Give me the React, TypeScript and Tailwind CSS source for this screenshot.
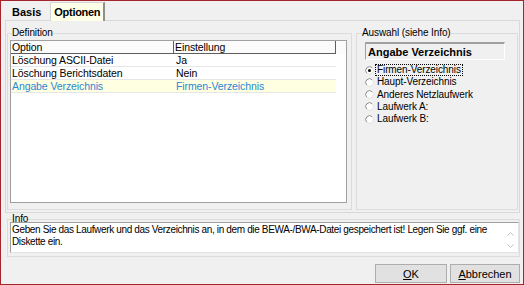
import React from 'react';

const rows = [
  { option: 'Löschung ASCII-Datei', value: 'Ja', active: false },
  { option: 'Löschung Berichtsdaten', value: 'Nein', active: false },
  { option: 'Angabe Verzeichnis', value: 'Firmen-Verzeichnis', active: true },
];

const choices = ['Firmen-Verzeichnis', 'Haupt-Verzeichnis', 'Anderes Netzlaufwerk', 'Laufwerk A:', 'Laufwerk B:'];

function Radio({ checked }: { checked: boolean }) {
  return (
    <svg width="9" height="9" viewBox="0 0 9 9" className="shrink-0">
      <circle cx="4.5" cy="4.5" r="3.8" fill="#ffffff" />
      <path d="M7.2 1.8 A3.8 3.8 0 0 0 1.8 7.2" fill="none" stroke="#8a8a8a" strokeWidth="1" />
      <path d="M1.8 7.2 A3.8 3.8 0 0 0 7.2 1.8" fill="none" stroke="#e2e2e2" strokeWidth="1" />
      {checked && <circle cx="4.5" cy="4.5" r="1.5" fill="#000000" />}
    </svg>
  );
}

function Chevron({ up }: { up: boolean }) {
  return (
    <svg width="7" height="4" viewBox="0 0 7 4">
      <polyline
        points={up ? '0.5,3.5 3.5,0.5 6.5,3.5' : '0.5,0.5 3.5,3.5 6.5,0.5'}
        fill="none"
        stroke="#c2c2c2"
        strokeWidth="1"
      />
    </svg>
  );
}

export default function App() {
  return (
    <div className="w-[524px] h-[285px] bg-[#f0f0f0] border border-[#a4262c] flex flex-col overflow-hidden text-[10px] leading-[12px] tracking-[-0.1px] text-black font-['Liberation_Sans',Arial,sans-serif]">
      {/* tabs */}
      <div className="h-[19px] shrink-0 flex items-end pl-[5px] text-[11px] tracking-normal">
        <div className="h-[16px] px-[6px] flex items-center font-bold">Basis</div>
        <div className="relative z-10 ml-[3px] h-[19px] -mb-px px-[3px] flex items-center font-bold tracking-[-0.3px] bg-[#ffffe8] border-l border-t border-[#d4d4d4] border-r-2 border-r-[#8e8e8e]">
          Optionen
        </div>
      </div>

      {/* tab page */}
      <div className="ml-[4px] w-[515px] h-[193px] shrink-0 border border-[#d9d9d9] flex items-start">
        <fieldset className="ml-[1px] mt-[6px] w-[345px] h-[183px] border border-[#dcdcdc]">
          <legend className="ml-[4px] leading-[12px]">Definition</legend>
          <div className="mt-[1px] ml-[2px] w-[337px] h-[163px] border border-[#a0a0a0] bg-white text-[10.5px]">
            <div className="flex h-[13px] bg-[#fbfbfb]">
              <div className="w-[163px] border-r border-b border-[#5e5e5e] pl-[1px] leading-[12px]">Option</div>
              <div className="w-[162px] border-r border-b border-[#5e5e5e] pl-[1px] leading-[12px]">Einstellung</div>
            </div>
            {rows.map((r) => (
              <div
                key={r.option}
                className={`flex w-[325px] h-[13px] border-b border-[#e6e6e6] ${
                  r.active ? 'bg-[#ffffe1] text-[#2b86d6]' : ''
                }`}
              >
                <div className="w-[163px] pl-[1px] leading-[12px]">{r.option}</div>
                <div className="w-[162px] pl-[2px] leading-[12px]">{r.value}</div>
              </div>
            ))}
          </div>
        </fieldset>

        <fieldset className="ml-[4px] mt-[6px] w-[162px] h-[183px] border border-[#dcdcdc]">
          <legend className="ml-[5px] leading-[12px]">Auswahl (siehe Info)</legend>
          <div className="ml-[8px] mt-[3px] w-[140px] h-[18px] flex items-center pl-[2px] text-[11px] font-bold tracking-normal border-t-2 border-l border-[#a0a0a0] border-r border-b border-r-[#ffffff] border-b-[#ffffff]">
            Angabe Verzeichnis
          </div>
          <div className="mt-[4px] flex flex-col">
            {choices.map((c, i) => (
              <div key={c} className="h-[12.25px] flex items-center pl-[8px]">
                <Radio checked={i === 0} />
                <span
                  className={`ml-[1px] px-[1px] leading-[10px] border border-dotted ${
                    i === 0 ? 'border-[#000000]' : 'border-transparent'
                  }`}
                >
                  {c}
                </span>
              </div>
            ))}
          </div>
        </fieldset>
      </div>

      {/* info */}
      <fieldset className="ml-[6px] w-[513px] h-[44px] shrink-0 border border-[#dcdcdc]">
        <legend className="ml-[4px] leading-[12px]">Info</legend>
        <div className="-mt-[3px] ml-[2px] w-[509px] h-[31px] flex bg-white border border-[#a0a0a0] border-r-[#e3e3e3] border-b-[#e3e3e3]">
          <div className="flex-1 pl-[1px] pt-[1px] leading-[12px] tracking-[-0.35px] whitespace-nowrap overflow-hidden">
            Geben Sie das Laufwerk und das Verzeichnis an, in dem die BEWA-/BWA-Datei gespeichert ist! Legen Sie ggf. eine
            <br />
            Diskette ein.
          </div>
          <div className="w-[16px] shrink-0 flex flex-col items-center pt-[9px] gap-[8px]">
            <Chevron up />
            <Chevron up={false} />
          </div>
        </div>
      </fieldset>

      {/* buttons */}
      <div className="mt-[7px] flex justify-end gap-[3px] pr-[3px] text-[11px] tracking-normal">
        <button className="w-[72px] h-[19px] bg-[#e1e1e1] border border-[#adadad] leading-[12px]">
          <span className="underline">O</span>K
        </button>
        <button className="w-[70px] h-[19px] bg-[#e1e1e1] border border-[#adadad] leading-[12px]">
          <span className="underline">A</span>bbrechen
        </button>
      </div>
    </div>
  );
}
